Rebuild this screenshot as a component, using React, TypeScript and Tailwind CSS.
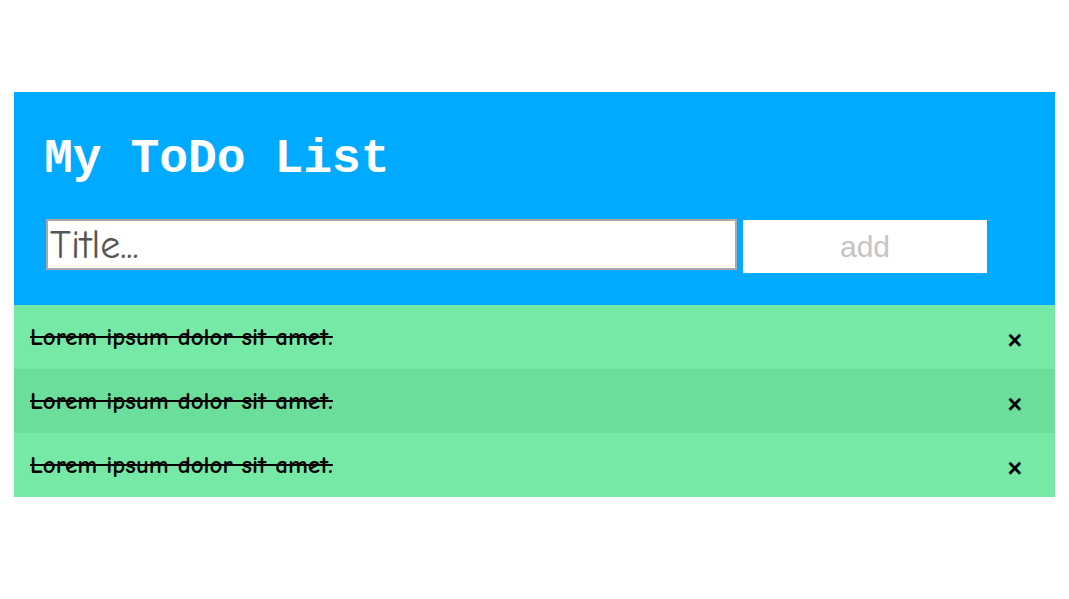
import { useState } from "react";

type Todo = { id: number; title: string; done: boolean };

const comic = "font-['Comic_Sans_MS','Comic_Neue','Noto_Sans',sans-serif]";

export default function App() {
  const [title, setTitle] = useState("");
  const [todos, setTodos] = useState<Todo[]>([
    { id: 1, title: "Lorem ipsum dolor sit amet.", done: true },
    { id: 2, title: "Lorem ipsum dolor sit amet.", done: true },
    { id: 3, title: "Lorem ipsum dolor sit amet.", done: true },
  ]);

  function addTodo() {
    if (!title.trim()) return;
    setTodos((t) => [...t, { id: Date.now(), title: title.trim(), done: false }]);
    setTitle("");
  }

  return (
    <div className="min-h-[599px] bg-white pt-[92px] px-[14px]">
      <div className="w-[1041px]">
        {/* header */}
        <div className="bg-[#00aaff] pl-[32px] pt-[43px] pb-[32px]">
          <h2 className="font-['Liberation_Mono','Courier_New',monospace] font-bold text-white text-[48px] leading-[48px] -ml-[2px]">
            My ToDo List
          </h2>
          <div className="mt-[36px] flex items-start gap-[6px]">
            <input
              type="text"
              value={title}
              onChange={(e) => setTitle(e.target.value)}
              placeholder="Title..."
              className={`${comic} w-[691px] h-[51px] border-2 border-[#a9a9a9] bg-white px-[2px] text-[40px] leading-[47px] text-[#555] placeholder:text-[#555] outline-none`}
            />
            <button
              type="button"
              onClick={addTodo}
              className="mt-[1px] w-[244px] h-[53px] bg-white font-['Liberation_Sans',Arial,sans-serif] text-[30px] text-[#c4c4c4]"
            >
              add
            </button>
          </div>
        </div>

        {/* list */}
        <ul>
          {todos.map((t, i) => (
            <li
              key={t.id}
              onClick={() => setTodos((all) => all.map((x) => (x.id === t.id ? { ...x, done: !x.done } : x)))}
              className={`flex items-center justify-between h-[64px] pl-[16px] pr-[33px] cursor-pointer ${
                i % 2 === 1 ? "bg-[#6bde9b]" : "bg-[#76e9a6]"
              }`}
            >
              <span className={`${comic} font-bold text-[25px] text-black ${t.done ? "line-through" : ""}`}>{t.title}</span>
              <button
                type="button"
                onClick={(e) => {
                  e.stopPropagation();
                  setTodos((all) => all.filter((x) => x.id !== t.id));
                }}
                className="mt-[6px] font-['Liberation_Sans',Arial,sans-serif] font-bold text-[25px] text-black leading-none"
              >
                ×
              </button>
            </li>
          ))}
        </ul>
      </div>
    </div>
  );
}
